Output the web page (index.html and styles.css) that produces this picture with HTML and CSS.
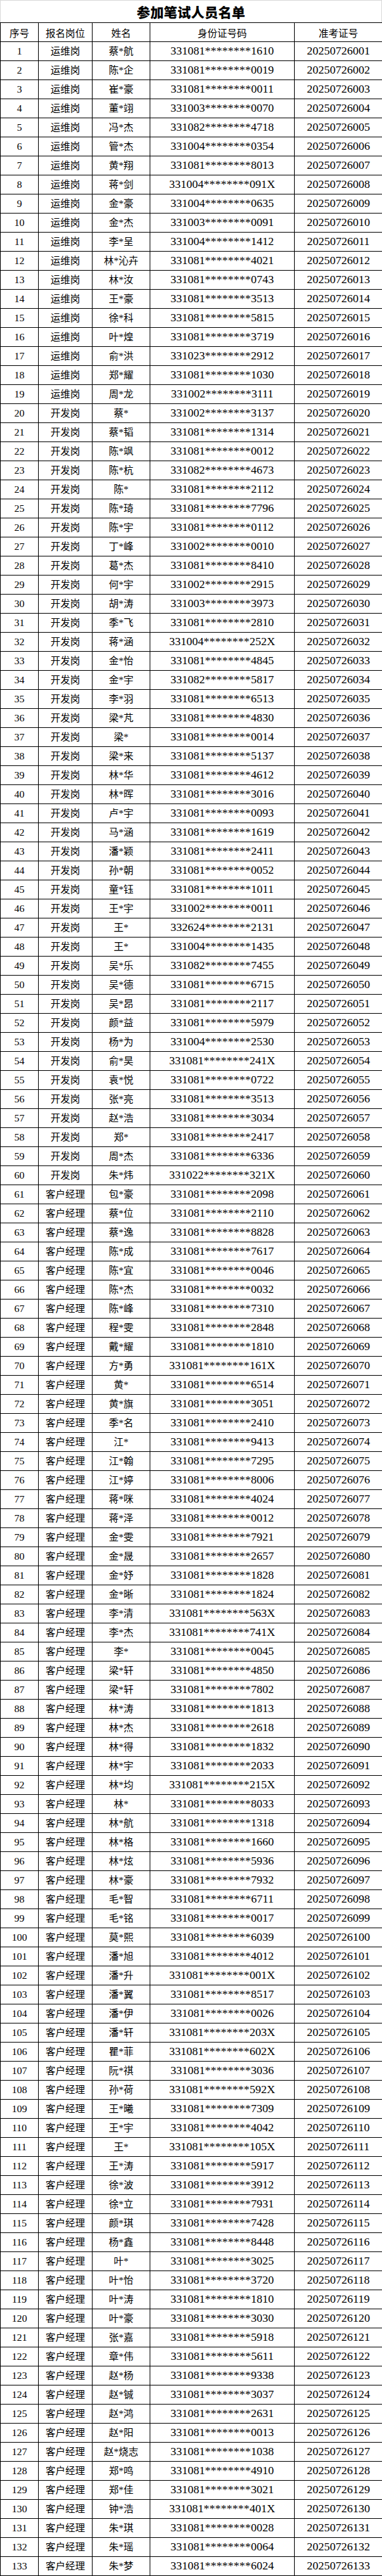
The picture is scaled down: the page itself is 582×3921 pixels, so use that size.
FILE: index.html
```html
<!DOCTYPE html>
<html lang="zh-CN">
<head>
<meta charset="utf-8">
<title>参加笔试人员名单</title>
<link rel="stylesheet" href="styles.css">
</head>
<body>
<div class="sheet">
  <div class="title">参加笔试人员名单</div>
  <table class="roster">
    <colgroup>
      <col class="c-seq"><col class="c-pos"><col class="c-name"><col class="c-id"><col class="c-exam">
    </colgroup>
    <thead>
      <tr><th>序号</th><th>报名岗位</th><th>姓名</th><th>身份证号码</th><th>准考证号</th></tr>
    </thead>
    <tbody>
<tr><td class="seq">1</td><td class="cn">运维岗</td><td class="cn">蔡*航</td><td class="num">331081********1610</td><td class="num">20250726001</td></tr>
<tr><td class="seq">2</td><td class="cn">运维岗</td><td class="cn">陈*企</td><td class="num">331081********0019</td><td class="num">20250726002</td></tr>
<tr><td class="seq">3</td><td class="cn">运维岗</td><td class="cn">崔*豪</td><td class="num">331081********0011</td><td class="num">20250726003</td></tr>
<tr><td class="seq">4</td><td class="cn">运维岗</td><td class="cn">董*翊</td><td class="num">331003********0070</td><td class="num">20250726004</td></tr>
<tr><td class="seq">5</td><td class="cn">运维岗</td><td class="cn">冯*杰</td><td class="num">331082********4718</td><td class="num">20250726005</td></tr>
<tr><td class="seq">6</td><td class="cn">运维岗</td><td class="cn">管*杰</td><td class="num">331004********0354</td><td class="num">20250726006</td></tr>
<tr><td class="seq">7</td><td class="cn">运维岗</td><td class="cn">黄*翔</td><td class="num">331081********8013</td><td class="num">20250726007</td></tr>
<tr><td class="seq">8</td><td class="cn">运维岗</td><td class="cn">蒋*剑</td><td class="num">331004********091X</td><td class="num">20250726008</td></tr>
<tr><td class="seq">9</td><td class="cn">运维岗</td><td class="cn">金*豪</td><td class="num">331004********0635</td><td class="num">20250726009</td></tr>
<tr><td class="seq">10</td><td class="cn">运维岗</td><td class="cn">金*杰</td><td class="num">331003********0091</td><td class="num">20250726010</td></tr>
<tr><td class="seq">11</td><td class="cn">运维岗</td><td class="cn">李*呈</td><td class="num">331004********1412</td><td class="num">20250726011</td></tr>
<tr><td class="seq">12</td><td class="cn">运维岗</td><td class="cn">林*沁卉</td><td class="num">331081********4021</td><td class="num">20250726012</td></tr>
<tr><td class="seq">13</td><td class="cn">运维岗</td><td class="cn">林*汝</td><td class="num">331081********0743</td><td class="num">20250726013</td></tr>
<tr><td class="seq">14</td><td class="cn">运维岗</td><td class="cn">王*豪</td><td class="num">331081********3513</td><td class="num">20250726014</td></tr>
<tr><td class="seq">15</td><td class="cn">运维岗</td><td class="cn">徐*科</td><td class="num">331081********5815</td><td class="num">20250726015</td></tr>
<tr><td class="seq">16</td><td class="cn">运维岗</td><td class="cn">叶*煌</td><td class="num">331081********3719</td><td class="num">20250726016</td></tr>
<tr><td class="seq">17</td><td class="cn">运维岗</td><td class="cn">俞*洪</td><td class="num">331023********2912</td><td class="num">20250726017</td></tr>
<tr><td class="seq">18</td><td class="cn">运维岗</td><td class="cn">郑*耀</td><td class="num">331081********1030</td><td class="num">20250726018</td></tr>
<tr><td class="seq">19</td><td class="cn">运维岗</td><td class="cn">周*龙</td><td class="num">331002********3111</td><td class="num">20250726019</td></tr>
<tr><td class="seq">20</td><td class="cn">开发岗</td><td class="cn">蔡*</td><td class="num">331002********3137</td><td class="num">20250726020</td></tr>
<tr><td class="seq">21</td><td class="cn">开发岗</td><td class="cn">蔡*韬</td><td class="num">331081********1314</td><td class="num">20250726021</td></tr>
<tr><td class="seq">22</td><td class="cn">开发岗</td><td class="cn">陈*飒</td><td class="num">331081********0012</td><td class="num">20250726022</td></tr>
<tr><td class="seq">23</td><td class="cn">开发岗</td><td class="cn">陈*杭</td><td class="num">331082********4673</td><td class="num">20250726023</td></tr>
<tr><td class="seq">24</td><td class="cn">开发岗</td><td class="cn">陈*</td><td class="num">331081********2112</td><td class="num">20250726024</td></tr>
<tr><td class="seq">25</td><td class="cn">开发岗</td><td class="cn">陈*琦</td><td class="num">331081********7796</td><td class="num">20250726025</td></tr>
<tr><td class="seq">26</td><td class="cn">开发岗</td><td class="cn">陈*宇</td><td class="num">331081********0112</td><td class="num">20250726026</td></tr>
<tr><td class="seq">27</td><td class="cn">开发岗</td><td class="cn">丁*峰</td><td class="num">331002********0010</td><td class="num">20250726027</td></tr>
<tr><td class="seq">28</td><td class="cn">开发岗</td><td class="cn">葛*杰</td><td class="num">331081********8410</td><td class="num">20250726028</td></tr>
<tr><td class="seq">29</td><td class="cn">开发岗</td><td class="cn">何*宇</td><td class="num">331002********2915</td><td class="num">20250726029</td></tr>
<tr><td class="seq">30</td><td class="cn">开发岗</td><td class="cn">胡*涛</td><td class="num">331003********3973</td><td class="num">20250726030</td></tr>
<tr><td class="seq">31</td><td class="cn">开发岗</td><td class="cn">季*飞</td><td class="num">331081********2810</td><td class="num">20250726031</td></tr>
<tr><td class="seq">32</td><td class="cn">开发岗</td><td class="cn">蒋*涵</td><td class="num">331004********252X</td><td class="num">20250726032</td></tr>
<tr><td class="seq">33</td><td class="cn">开发岗</td><td class="cn">金*怡</td><td class="num">331081********4845</td><td class="num">20250726033</td></tr>
<tr><td class="seq">34</td><td class="cn">开发岗</td><td class="cn">金*宇</td><td class="num">331082********5817</td><td class="num">20250726034</td></tr>
<tr><td class="seq">35</td><td class="cn">开发岗</td><td class="cn">李*羽</td><td class="num">331081********6513</td><td class="num">20250726035</td></tr>
<tr><td class="seq">36</td><td class="cn">开发岗</td><td class="cn">梁*芃</td><td class="num">331081********4830</td><td class="num">20250726036</td></tr>
<tr><td class="seq">37</td><td class="cn">开发岗</td><td class="cn">梁*</td><td class="num">331081********0014</td><td class="num">20250726037</td></tr>
<tr><td class="seq">38</td><td class="cn">开发岗</td><td class="cn">梁*来</td><td class="num">331081********5137</td><td class="num">20250726038</td></tr>
<tr><td class="seq">39</td><td class="cn">开发岗</td><td class="cn">林*华</td><td class="num">331081********4612</td><td class="num">20250726039</td></tr>
<tr><td class="seq">40</td><td class="cn">开发岗</td><td class="cn">林*晖</td><td class="num">331081********3016</td><td class="num">20250726040</td></tr>
<tr><td class="seq">41</td><td class="cn">开发岗</td><td class="cn">卢*宇</td><td class="num">331081********0093</td><td class="num">20250726041</td></tr>
<tr><td class="seq">42</td><td class="cn">开发岗</td><td class="cn">马*涵</td><td class="num">331081********1619</td><td class="num">20250726042</td></tr>
<tr><td class="seq">43</td><td class="cn">开发岗</td><td class="cn">潘*颖</td><td class="num">331081********2411</td><td class="num">20250726043</td></tr>
<tr><td class="seq">44</td><td class="cn">开发岗</td><td class="cn">孙*朝</td><td class="num">331081********0052</td><td class="num">20250726044</td></tr>
<tr><td class="seq">45</td><td class="cn">开发岗</td><td class="cn">童*钰</td><td class="num">331081********1011</td><td class="num">20250726045</td></tr>
<tr><td class="seq">46</td><td class="cn">开发岗</td><td class="cn">王*宇</td><td class="num">331002********0011</td><td class="num">20250726046</td></tr>
<tr><td class="seq">47</td><td class="cn">开发岗</td><td class="cn">王*</td><td class="num">332624********2131</td><td class="num">20250726047</td></tr>
<tr><td class="seq">48</td><td class="cn">开发岗</td><td class="cn">王*</td><td class="num">331004********1435</td><td class="num">20250726048</td></tr>
<tr><td class="seq">49</td><td class="cn">开发岗</td><td class="cn">吴*乐</td><td class="num">331082********7455</td><td class="num">20250726049</td></tr>
<tr><td class="seq">50</td><td class="cn">开发岗</td><td class="cn">吴*德</td><td class="num">331081********6715</td><td class="num">20250726050</td></tr>
<tr><td class="seq">51</td><td class="cn">开发岗</td><td class="cn">吴*昂</td><td class="num">331081********2117</td><td class="num">20250726051</td></tr>
<tr><td class="seq">52</td><td class="cn">开发岗</td><td class="cn">颜*益</td><td class="num">331081********5979</td><td class="num">20250726052</td></tr>
<tr><td class="seq">53</td><td class="cn">开发岗</td><td class="cn">杨*为</td><td class="num">331004********2530</td><td class="num">20250726053</td></tr>
<tr><td class="seq">54</td><td class="cn">开发岗</td><td class="cn">俞*昊</td><td class="num">331081********241X</td><td class="num">20250726054</td></tr>
<tr><td class="seq">55</td><td class="cn">开发岗</td><td class="cn">袁*悦</td><td class="num">331081********0722</td><td class="num">20250726055</td></tr>
<tr><td class="seq">56</td><td class="cn">开发岗</td><td class="cn">张*亮</td><td class="num">331081********3513</td><td class="num">20250726056</td></tr>
<tr><td class="seq">57</td><td class="cn">开发岗</td><td class="cn">赵*浩</td><td class="num">331081********3034</td><td class="num">20250726057</td></tr>
<tr><td class="seq">58</td><td class="cn">开发岗</td><td class="cn">郑*</td><td class="num">331081********2417</td><td class="num">20250726058</td></tr>
<tr><td class="seq">59</td><td class="cn">开发岗</td><td class="cn">周*杰</td><td class="num">331081********6336</td><td class="num">20250726059</td></tr>
<tr><td class="seq">60</td><td class="cn">开发岗</td><td class="cn">朱*炜</td><td class="num">331022********321X</td><td class="num">20250726060</td></tr>
<tr><td class="seq">61</td><td class="cn">客户经理</td><td class="cn">包*豪</td><td class="num">331081********2098</td><td class="num">20250726061</td></tr>
<tr><td class="seq">62</td><td class="cn">客户经理</td><td class="cn">蔡*位</td><td class="num">331081********2110</td><td class="num">20250726062</td></tr>
<tr><td class="seq">63</td><td class="cn">客户经理</td><td class="cn">蔡*逸</td><td class="num">331081********8828</td><td class="num">20250726063</td></tr>
<tr><td class="seq">64</td><td class="cn">客户经理</td><td class="cn">陈*成</td><td class="num">331081********7617</td><td class="num">20250726064</td></tr>
<tr><td class="seq">65</td><td class="cn">客户经理</td><td class="cn">陈*宜</td><td class="num">331081********0046</td><td class="num">20250726065</td></tr>
<tr><td class="seq">66</td><td class="cn">客户经理</td><td class="cn">陈*杰</td><td class="num">331081********0032</td><td class="num">20250726066</td></tr>
<tr><td class="seq">67</td><td class="cn">客户经理</td><td class="cn">陈*峰</td><td class="num">331081********7310</td><td class="num">20250726067</td></tr>
<tr><td class="seq">68</td><td class="cn">客户经理</td><td class="cn">程*雯</td><td class="num">331081********2848</td><td class="num">20250726068</td></tr>
<tr><td class="seq">69</td><td class="cn">客户经理</td><td class="cn">戴*耀</td><td class="num">331081********1810</td><td class="num">20250726069</td></tr>
<tr><td class="seq">70</td><td class="cn">客户经理</td><td class="cn">方*勇</td><td class="num">331081********161X</td><td class="num">20250726070</td></tr>
<tr><td class="seq">71</td><td class="cn">客户经理</td><td class="cn">黄*</td><td class="num">331081********6514</td><td class="num">20250726071</td></tr>
<tr><td class="seq">72</td><td class="cn">客户经理</td><td class="cn">黄*旗</td><td class="num">331081********3051</td><td class="num">20250726072</td></tr>
<tr><td class="seq">73</td><td class="cn">客户经理</td><td class="cn">季*名</td><td class="num">331081********2410</td><td class="num">20250726073</td></tr>
<tr><td class="seq">74</td><td class="cn">客户经理</td><td class="cn">江*</td><td class="num">331081********9413</td><td class="num">20250726074</td></tr>
<tr><td class="seq">75</td><td class="cn">客户经理</td><td class="cn">江*翰</td><td class="num">331081********7295</td><td class="num">20250726075</td></tr>
<tr><td class="seq">76</td><td class="cn">客户经理</td><td class="cn">江*婷</td><td class="num">331081********8006</td><td class="num">20250726076</td></tr>
<tr><td class="seq">77</td><td class="cn">客户经理</td><td class="cn">蒋*咪</td><td class="num">331081********4024</td><td class="num">20250726077</td></tr>
<tr><td class="seq">78</td><td class="cn">客户经理</td><td class="cn">蒋*泽</td><td class="num">331081********0012</td><td class="num">20250726078</td></tr>
<tr><td class="seq">79</td><td class="cn">客户经理</td><td class="cn">金*雯</td><td class="num">331081********7921</td><td class="num">20250726079</td></tr>
<tr><td class="seq">80</td><td class="cn">客户经理</td><td class="cn">金*晟</td><td class="num">331081********2657</td><td class="num">20250726080</td></tr>
<tr><td class="seq">81</td><td class="cn">客户经理</td><td class="cn">金*妤</td><td class="num">331081********1828</td><td class="num">20250726081</td></tr>
<tr><td class="seq">82</td><td class="cn">客户经理</td><td class="cn">金*晰</td><td class="num">331081********1824</td><td class="num">20250726082</td></tr>
<tr><td class="seq">83</td><td class="cn">客户经理</td><td class="cn">李*清</td><td class="num">331081********563X</td><td class="num">20250726083</td></tr>
<tr><td class="seq">84</td><td class="cn">客户经理</td><td class="cn">李*杰</td><td class="num">331081********741X</td><td class="num">20250726084</td></tr>
<tr><td class="seq">85</td><td class="cn">客户经理</td><td class="cn">李*</td><td class="num">331081********0045</td><td class="num">20250726085</td></tr>
<tr><td class="seq">86</td><td class="cn">客户经理</td><td class="cn">梁*轩</td><td class="num">331081********4850</td><td class="num">20250726086</td></tr>
<tr><td class="seq">87</td><td class="cn">客户经理</td><td class="cn">梁*轩</td><td class="num">331081********7802</td><td class="num">20250726087</td></tr>
<tr><td class="seq">88</td><td class="cn">客户经理</td><td class="cn">林*涛</td><td class="num">331081********1813</td><td class="num">20250726088</td></tr>
<tr><td class="seq">89</td><td class="cn">客户经理</td><td class="cn">林*杰</td><td class="num">331081********2618</td><td class="num">20250726089</td></tr>
<tr><td class="seq">90</td><td class="cn">客户经理</td><td class="cn">林*得</td><td class="num">331081********1832</td><td class="num">20250726090</td></tr>
<tr><td class="seq">91</td><td class="cn">客户经理</td><td class="cn">林*宇</td><td class="num">331081********2033</td><td class="num">20250726091</td></tr>
<tr><td class="seq">92</td><td class="cn">客户经理</td><td class="cn">林*均</td><td class="num">331081********215X</td><td class="num">20250726092</td></tr>
<tr><td class="seq">93</td><td class="cn">客户经理</td><td class="cn">林*</td><td class="num">331081********8033</td><td class="num">20250726093</td></tr>
<tr><td class="seq">94</td><td class="cn">客户经理</td><td class="cn">林*航</td><td class="num">331081********1318</td><td class="num">20250726094</td></tr>
<tr><td class="seq">95</td><td class="cn">客户经理</td><td class="cn">林*格</td><td class="num">331081********1660</td><td class="num">20250726095</td></tr>
<tr><td class="seq">96</td><td class="cn">客户经理</td><td class="cn">林*炫</td><td class="num">331081********5936</td><td class="num">20250726096</td></tr>
<tr><td class="seq">97</td><td class="cn">客户经理</td><td class="cn">林*豪</td><td class="num">331081********7932</td><td class="num">20250726097</td></tr>
<tr><td class="seq">98</td><td class="cn">客户经理</td><td class="cn">毛*智</td><td class="num">331081********6711</td><td class="num">20250726098</td></tr>
<tr><td class="seq">99</td><td class="cn">客户经理</td><td class="cn">毛*铭</td><td class="num">331081********0017</td><td class="num">20250726099</td></tr>
<tr><td class="seq">100</td><td class="cn">客户经理</td><td class="cn">莫*熙</td><td class="num">331081********6039</td><td class="num">20250726100</td></tr>
<tr><td class="seq">101</td><td class="cn">客户经理</td><td class="cn">潘*旭</td><td class="num">331081********4012</td><td class="num">20250726101</td></tr>
<tr><td class="seq">102</td><td class="cn">客户经理</td><td class="cn">潘*升</td><td class="num">331081********001X</td><td class="num">20250726102</td></tr>
<tr><td class="seq">103</td><td class="cn">客户经理</td><td class="cn">潘*翼</td><td class="num">331081********8517</td><td class="num">20250726103</td></tr>
<tr><td class="seq">104</td><td class="cn">客户经理</td><td class="cn">潘*伊</td><td class="num">331081********0026</td><td class="num">20250726104</td></tr>
<tr><td class="seq">105</td><td class="cn">客户经理</td><td class="cn">潘*轩</td><td class="num">331081********203X</td><td class="num">20250726105</td></tr>
<tr><td class="seq">106</td><td class="cn">客户经理</td><td class="cn">瞿*菲</td><td class="num">331081********602X</td><td class="num">20250726106</td></tr>
<tr><td class="seq">107</td><td class="cn">客户经理</td><td class="cn">阮*祺</td><td class="num">331081********3036</td><td class="num">20250726107</td></tr>
<tr><td class="seq">108</td><td class="cn">客户经理</td><td class="cn">孙*荷</td><td class="num">331081********592X</td><td class="num">20250726108</td></tr>
<tr><td class="seq">109</td><td class="cn">客户经理</td><td class="cn">王*曦</td><td class="num">331081********7309</td><td class="num">20250726109</td></tr>
<tr><td class="seq">110</td><td class="cn">客户经理</td><td class="cn">王*宇</td><td class="num">331081********4042</td><td class="num">20250726110</td></tr>
<tr><td class="seq">111</td><td class="cn">客户经理</td><td class="cn">王*</td><td class="num">331081********105X</td><td class="num">20250726111</td></tr>
<tr><td class="seq">112</td><td class="cn">客户经理</td><td class="cn">王*涛</td><td class="num">331081********5917</td><td class="num">20250726112</td></tr>
<tr><td class="seq">113</td><td class="cn">客户经理</td><td class="cn">徐*波</td><td class="num">331081********3912</td><td class="num">20250726113</td></tr>
<tr><td class="seq">114</td><td class="cn">客户经理</td><td class="cn">徐*立</td><td class="num">331081********7931</td><td class="num">20250726114</td></tr>
<tr><td class="seq">115</td><td class="cn">客户经理</td><td class="cn">颜*琪</td><td class="num">331081********7428</td><td class="num">20250726115</td></tr>
<tr><td class="seq">116</td><td class="cn">客户经理</td><td class="cn">杨*鑫</td><td class="num">331081********8448</td><td class="num">20250726116</td></tr>
<tr><td class="seq">117</td><td class="cn">客户经理</td><td class="cn">叶*</td><td class="num">331081********3025</td><td class="num">20250726117</td></tr>
<tr><td class="seq">118</td><td class="cn">客户经理</td><td class="cn">叶*怡</td><td class="num">331081********3720</td><td class="num">20250726118</td></tr>
<tr><td class="seq">119</td><td class="cn">客户经理</td><td class="cn">叶*涛</td><td class="num">331081********1810</td><td class="num">20250726119</td></tr>
<tr><td class="seq">120</td><td class="cn">客户经理</td><td class="cn">叶*豪</td><td class="num">331081********3030</td><td class="num">20250726120</td></tr>
<tr><td class="seq">121</td><td class="cn">客户经理</td><td class="cn">张*嘉</td><td class="num">331081********5918</td><td class="num">20250726121</td></tr>
<tr><td class="seq">122</td><td class="cn">客户经理</td><td class="cn">章*伟</td><td class="num">331081********5611</td><td class="num">20250726122</td></tr>
<tr><td class="seq">123</td><td class="cn">客户经理</td><td class="cn">赵*杨</td><td class="num">331081********9338</td><td class="num">20250726123</td></tr>
<tr><td class="seq">124</td><td class="cn">客户经理</td><td class="cn">赵*铖</td><td class="num">331081********3037</td><td class="num">20250726124</td></tr>
<tr><td class="seq">125</td><td class="cn">客户经理</td><td class="cn">赵*鸿</td><td class="num">331081********2631</td><td class="num">20250726125</td></tr>
<tr><td class="seq">126</td><td class="cn">客户经理</td><td class="cn">赵*阳</td><td class="num">331081********0013</td><td class="num">20250726126</td></tr>
<tr><td class="seq">127</td><td class="cn">客户经理</td><td class="cn">赵*烧志</td><td class="num">331081********1038</td><td class="num">20250726127</td></tr>
<tr><td class="seq">128</td><td class="cn">客户经理</td><td class="cn">郑*鸣</td><td class="num">331081********4910</td><td class="num">20250726128</td></tr>
<tr><td class="seq">129</td><td class="cn">客户经理</td><td class="cn">郑*佳</td><td class="num">331081********3021</td><td class="num">20250726129</td></tr>
<tr><td class="seq">130</td><td class="cn">客户经理</td><td class="cn">钟*浩</td><td class="num">331081********401X</td><td class="num">20250726130</td></tr>
<tr><td class="seq">131</td><td class="cn">客户经理</td><td class="cn">朱*琪</td><td class="num">331081********0028</td><td class="num">20250726131</td></tr>
<tr><td class="seq">132</td><td class="cn">客户经理</td><td class="cn">朱*瑶</td><td class="num">331081********0064</td><td class="num">20250726132</td></tr>
<tr><td class="seq">133</td><td class="cn">客户经理</td><td class="cn">朱*梦</td><td class="num">331081********6024</td><td class="num">20250726133</td></tr>
    </tbody>
  </table>
</div>
</body>
</html>
```
FILE: styles.css
```css
html, body {
  margin: 0;
  padding: 0;
  background: #ffffff;
}

.sheet {
  width: 582px;
  color: #000000;
  font-family: "Liberation Serif", "Noto Sans CJK SC", serif;
}

.title {
  height: 34px;
  box-sizing: border-box;
  border-top: 1px solid #d9d9d9;
  border-left: 1px solid #d9d9d9;
  border-right: 1px solid #d9d9d9;
  display: flex;
  align-items: center;
  justify-content: center;
  font-family: "Noto Sans CJK SC", sans-serif;
  font-weight: 900;
  font-size: 20.5px;
  letter-spacing: 0.2px;
  padding-top: 1px;
}

.roster {
  width: 582px;
  table-layout: fixed;
  border-collapse: collapse;
}

.c-seq { width: 58px; }
.c-pos { width: 82px; }
.c-name { width: 88px; }
.c-id { width: 220px; }
.c-exam { width: 134px; }

.roster th,
.roster td {
  border: 1px solid #000000;
  height: 28px;
  padding: 0;
  text-align: center;
  vertical-align: middle;
  white-space: nowrap;
  overflow: hidden;
  line-height: 1;
}

.roster th {
  font-family: "Noto Sans CJK SC", sans-serif;
  font-weight: 400;
  font-size: 15px;
}

.roster td.seq {
  font-family: "Liberation Serif", serif;
  font-size: 15.5px;
}

.roster td.cn {
  font-family: "Liberation Serif", "Noto Sans CJK SC", serif;
  font-size: 15px;
}

.roster td.num {
  font-family: "Liberation Serif", serif;
  font-size: 17.5px;
}
```
